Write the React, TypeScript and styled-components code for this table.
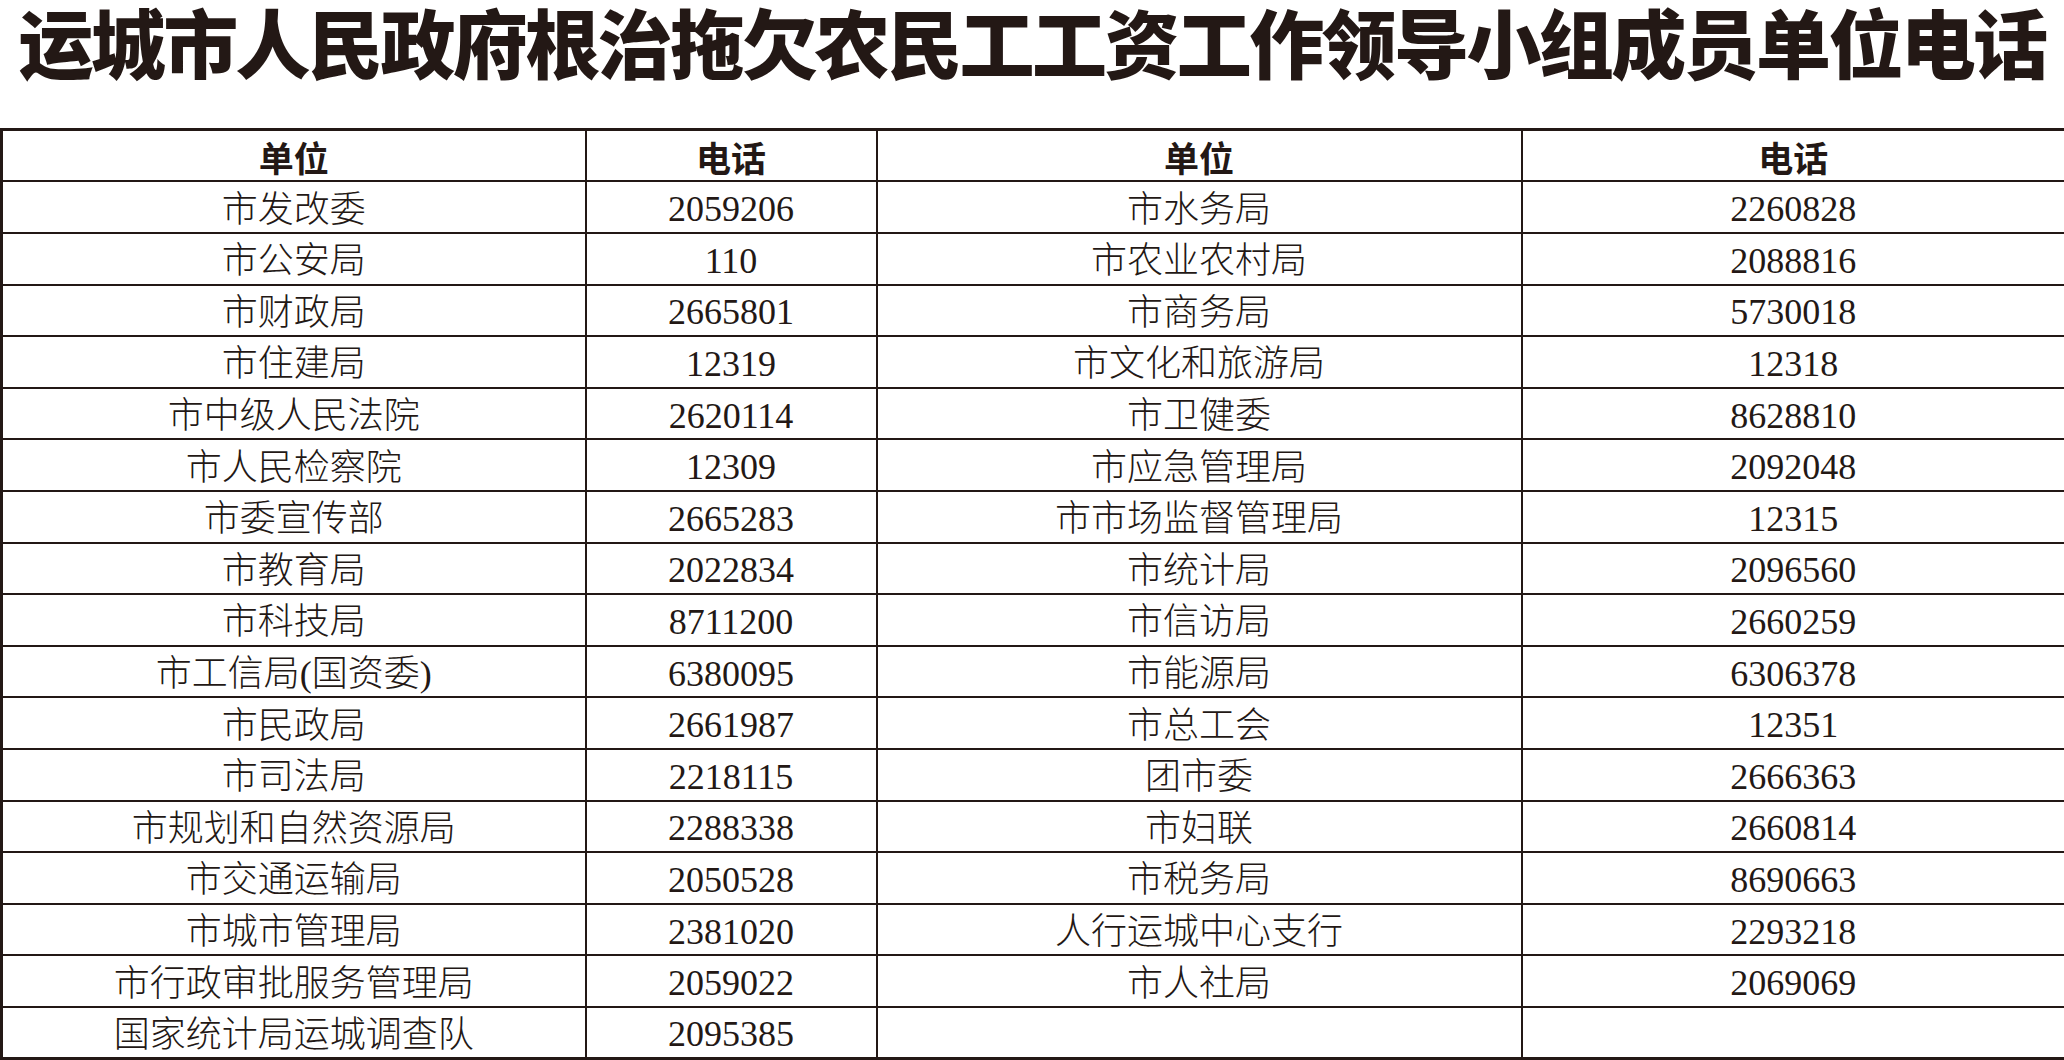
import React from "react";
import styled, { createGlobalStyle } from "styled-components";

const Global = createGlobalStyle`
  html, body { margin: 0; padding: 0; background: #ffffff; }
  body { width: 2064px; overflow: hidden; }
`;

const Page = styled.div`
  width: 2064px;
  height: 1060px;
  display: flex;
  flex-direction: column;
  color: #231815;
`;

const TitleBar = styled.div`
  height: 131px;
  display: flex;
  justify-content: center;
  align-items: flex-start;
`;

const Title = styled.h1`
  margin: 0;
  font-family: "Noto Sans CJK SC", sans-serif;
  font-weight: 900;
  font-size: 75px;
  line-height: 82px;
  letter-spacing: -2.6px;
  white-space: nowrap;
`;

const Table = styled.table`
  width: 2064px;
  height: 929px;
  border-collapse: collapse;
  table-layout: fixed;
  border: 3px solid #231815;
`;

const Row = styled.tr`
  height: 51.6px;
`;

const HeadCell = styled.th`
  border: 2px solid #231815;
  padding: 2px 0 0;
  text-align: center;
  vertical-align: middle;
  font-family: "Noto Sans CJK SC", sans-serif;
  font-weight: 700;
  font-size: 35px;
  line-height: 1;
`;

const Cell = styled.td<{ $num?: boolean }>`
  border: 2px solid #231815;
  padding: ${(p) => (p.$num ? "4px 0 0" : "5px 0 0")};
  text-align: center;
  vertical-align: middle;
  font-family: "Liberation Serif", "Noto Sans CJK SC", serif;
  font-weight: 300;
  font-size: 36px;
  line-height: 1;
  white-space: nowrap;
`;

const rows: [string, string, string, string][] = [
  ["市发改委", "2059206", "市水务局", "2260828"],
  ["市公安局", "110", "市农业农村局", "2088816"],
  ["市财政局", "2665801", "市商务局", "5730018"],
  ["市住建局", "12319", "市文化和旅游局", "12318"],
  ["市中级人民法院", "2620114", "市卫健委", "8628810"],
  ["市人民检察院", "12309", "市应急管理局", "2092048"],
  ["市委宣传部", "2665283", "市市场监督管理局", "12315"],
  ["市教育局", "2022834", "市统计局", "2096560"],
  ["市科技局", "8711200", "市信访局", "2660259"],
  ["市工信局(国资委)", "6380095", "市能源局", "6306378"],
  ["市民政局", "2661987", "市总工会", "12351"],
  ["市司法局", "2218115", "团市委", "2666363"],
  ["市规划和自然资源局", "2288338", "市妇联", "2660814"],
  ["市交通运输局", "2050528", "市税务局", "8690663"],
  ["市城市管理局", "2381020", "人行运城中心支行", "2293218"],
  ["市行政审批服务管理局", "2059022", "市人社局", "2069069"],
  ["国家统计局运城调查队", "2095385", "", ""],
];

export default function App() {
  return (
    <Page>
      <Global />
      <TitleBar>
        <Title>运城市人民政府根治拖欠农民工工资工作领导小组成员单位电话</Title>
      </TitleBar>
      <Table>
        <colgroup>
          <col style={{ width: "584px" }} />
          <col style={{ width: "291px" }} />
          <col style={{ width: "645px" }} />
          <col style={{ width: "544px" }} />
        </colgroup>
        <thead>
          <Row>
            <HeadCell>单位</HeadCell>
            <HeadCell>电话</HeadCell>
            <HeadCell>单位</HeadCell>
            <HeadCell>电话</HeadCell>
          </Row>
        </thead>
        <tbody>
          {rows.map((r, i) => (
            <Row key={i}>
              <Cell>{r[0]}</Cell>
              <Cell $num>{r[1]}</Cell>
              <Cell>{r[2]}</Cell>
              <Cell $num>{r[3]}</Cell>
            </Row>
          ))}
        </tbody>
      </Table>
    </Page>
  );
}
